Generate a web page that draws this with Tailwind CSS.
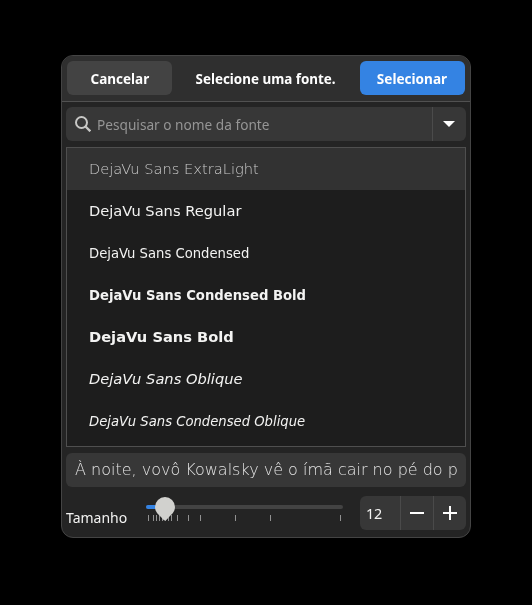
<!DOCTYPE html>
<html lang="pt-BR">
<head>
<meta charset="utf-8">
<title>Selecione uma fonte.</title>
<script src="https://cdn.jsdelivr.net/npm/@tailwindcss/browser@4"></script>
</head>
<body class="bg-black w-[532px] h-[605px] overflow-hidden pt-[55px] pl-[61px] font-['Noto_Sans',sans-serif] text-[#f4f4f3] antialiased">
<main class="w-[410px] h-[483px] rounded-[12px] bg-[#252525] border border-[#454545] overflow-hidden flex flex-col opacity-[0.999] will-change-transform">
  <header class="h-[46px] shrink-0 bg-[#303030] border-b border-[#525252] flex items-center justify-between px-[5px] pb-[2px] font-bold text-[14.67px] whitespace-nowrap text-white">
    <button class="w-[105px] h-[34px] rounded-[6px] bg-[#444444] flex items-center justify-center"><span class="scale-x-[0.92]">Cancelar</span></button>
    <h1 class="scale-x-[0.915] -mx-4">Selecione uma fonte.</h1>
    <button class="w-[105px] h-[34px] rounded-[6px] bg-[#3584e4] flex items-center justify-center pr-px"><span class="scale-x-[0.925]">Selecionar</span></button>
  </header>
  <div class="px-1 pt-[5px] flex flex-col">
    <div class="h-[34px] rounded-[6px] bg-[#383838] flex items-center">
      <svg class="ml-[9px] w-4 h-4 shrink-0" viewBox="0 0 16 16" fill="none" stroke="#c8c8c6" stroke-width="2"><circle cx="6.5" cy="6.5" r="5.5"/><path d="M10.5 10.5L15.3 15.3" stroke-width="2.3"/></svg>
      <span class="ml-1.5 flex-1 text-[14.67px] scale-x-[0.932] origin-left pb-px text-[#969696] whitespace-nowrap">Pesquisar o nome da fonte</span>
      <div class="w-[34px] h-full border-l border-[#4c4c4c] flex items-center justify-center pr-[2px]"><svg class="w-3 h-1.5" viewBox="0 0 12 6"><path d="M0 0H12L6 6Z" fill="#fff"/></svg></div>
    </div>
    <ul class="mt-[6px] h-[300px] border border-[#505050] bg-[#1e1e1e] font-['DejaVu_Sans'] text-[14.67px] whitespace-nowrap">
      <li class="h-[42px] pl-[22px] flex items-center bg-[#333333] text-[#cccccc] font-extralight">DejaVu Sans ExtraLight</li>
      <li class="h-[42px] pl-[22px] flex items-center">DejaVu Sans Regular</li>
      <li class="h-[42px] pl-[22px] flex items-center font-['DejaVu_Sans_Condensed'] [font-stretch:condensed]">DejaVu Sans Condensed</li>
      <li class="h-[42px] pl-[22px] flex items-center font-['DejaVu_Sans_Condensed'] [font-stretch:condensed] font-bold">DejaVu Sans Condensed Bold</li>
      <li class="h-[42px] pl-[22px] flex items-center font-bold">DejaVu Sans Bold</li>
      <li class="h-[42px] pl-[22px] flex items-center italic">DejaVu Sans Oblique</li>
      <li class="h-[42px] pl-[22px] flex items-center font-['DejaVu_Sans_Condensed'] [font-stretch:condensed] italic">DejaVu Sans Condensed Oblique</li>
    </ul>
    <div class="mt-[6px] h-[34px] rounded-[6px] bg-[#383838] flex items-center pl-[9px] font-['DejaVu_Sans'] font-extralight text-[16px] text-[#e4e4e4] whitespace-nowrap">À noite, vovô Kowalsky vê o ímã cair no pé do p</div>
    <div class="mt-[9px] h-[34px] flex">
      <label class="w-[79px] pt-[10px] text-[14.67px] leading-[22px] scale-x-[0.955] origin-left">Tamanho</label>
      <svg class="w-[200px] h-[34px] shrink-0" viewBox="145 496 200 34">
        <rect x="146" y="505" width="197" height="4" rx="2" fill="#444"/>
        <rect x="146" y="505" width="20" height="4" rx="2" fill="#3584e4"/>
        <path d="M148.5 515v6M153.5 515v6M156.5 515v6M159.5 515v6M162.5 515v6M165.5 515v6M168.5 515v6M171.5 515v6M177.5 515v6M188.5 515v6M200.5 515v6M235.5 515v6M270.5 515v6M340.5 515v6" stroke="#929292"/>
        <path d="M165 497a10 10 0 0 1 10 10c0 5-4 8-6 10c-2 2-2.500 3.500-4 3.500s-2-1.500-4-3.500c-2-2-6-5-6-10a10 10 0 0 1 10-10Z" fill="#d2d2cf"/>
      </svg>
      <div class="ml-[15px] w-[106px] rounded-[6px] bg-[#383838] flex">
        <span class="w-[40px] pl-1.5 leading-[34px] text-[14.67px] scale-x-[0.98] origin-left">12</span>
        <button class="w-[33px] border-l border-[#4b4b4b] flex items-center justify-center"><svg class="w-4 h-4" viewBox="0 0 16 16"><path d="M1 8H15" stroke="#fff" stroke-width="2"/></svg></button>
        <button class="w-[33px] border-l border-[#4b4b4b] flex items-center justify-center"><svg class="w-4 h-4" viewBox="0 0 16 16"><path d="M1 8H15M8 1V15" stroke="#fff" stroke-width="2"/></svg></button>
      </div>
    </div>
  </div>
</main>
</body>
</html>
